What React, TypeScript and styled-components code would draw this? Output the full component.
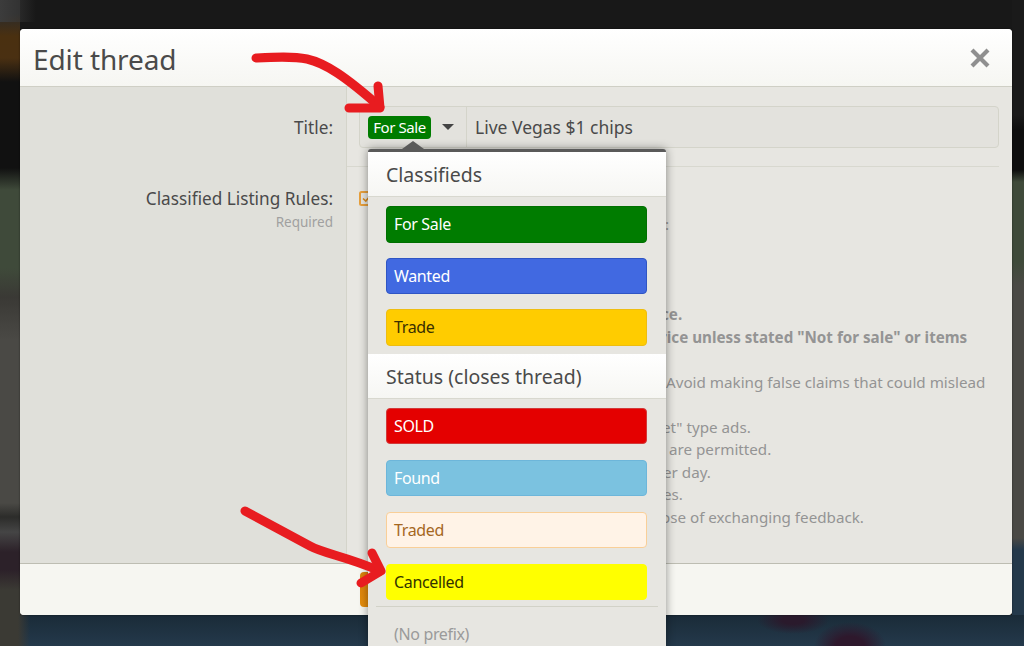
import React from 'react';
import styled, { createGlobalStyle } from 'styled-components';

const GlobalStyle = createGlobalStyle`
  html, body {
    margin: 0;
    height: 100%;
    overflow: hidden;
    background: #181818;
    font-family: 'Noto Sans', 'Open Sans', sans-serif;
  }
`;

// blurred forum page behind the overlay, only its edges show around the modal
const Page = styled.div`
  position: relative;
  box-sizing: border-box;
  width: 1024px;
  height: 646px;
  overflow: hidden;
  padding: 29px 12px 0 20px;
  background:
    radial-gradient(ellipse 36px 14px at 793px 620px, #2a1a2c 30%, rgba(42, 26, 44, 0) 100%),
    radial-gradient(ellipse 36px 24px at 850px 646px, #2e182c 40%, rgba(46, 24, 44, 0) 100%),
    linear-gradient(90deg, #3b3a34 0, #3b3a34 18px, rgba(59, 58, 52, 0) 30px) 0 600px / 40px 46px no-repeat,
    linear-gradient(180deg, #1a2b38 0, #24394b 100%) 0 615px / 100% 31px no-repeat,
    linear-gradient(90deg, #3c3c3c 0, rgba(60, 60, 60, 0) 36px) 0 0 / 40px 22px no-repeat,
    linear-gradient(180deg, #2b2b2b 0, #2b2b2b 14px, #4a3010 36px, #4a3012 58px, #111111 82px, #111111 168px,
      #3f4a3a 190px, #3f4a3a 268px, #3a3935 297px, #4a4945 340px, #4a4945 503px, #2c2c2a 517px, #454545 532px,
      #2c2129 552px, #2c2129 570px, #3b3a34 590px, #3b3a34 646px) 0 0 / 20px 646px no-repeat,
    linear-gradient(180deg, #1a1a1a 0, #1a1a1a 115px, #0e0e0e 130px, #0e0e0e 170px, #3f4a3a 182px, #3f4a3a 262px,
      #4a4945 285px, #4a4945 538px, #24394b 550px, #24394b 646px) right 0 / 12px 646px no-repeat,
    #181818;
`;

const Modal = styled.div`
  display: flex;
  flex-direction: column;
  width: 992px;
  height: 586px;
  border-radius: 4px;
  background: #e7e6e1;
  color: #4a4a4a;
  box-shadow: 0 0 2px rgba(0, 0, 0, 0.5);
`;

const ModalHeader = styled.div`
  display: flex;
  align-items: center;
  justify-content: space-between;
  box-sizing: border-box;
  height: 58px;
  padding: 3px 21px 0 13px;
  border-radius: 4px 4px 0 0;
  border-bottom: 1px solid #cfcfc5;
  background: linear-gradient(180deg, #ffffff 0%, #f6f6f2 100%);
`;

const ModalTitle = styled.h1`
  margin: 0;
  font-size: 28px;
  font-weight: 400;
  letter-spacing: -0.1px;
  color: #4a4a4a;
`;

const CloseIcon = styled.svg`
  display: block;
  width: 22px;
  height: 22px;
  margin-top: -3px;
`;

const ModalBody = styled.div`
  flex: 1;
  display: flex;
  flex-direction: column;
  min-height: 0;
`;

const FormRow = styled.div<{ $grow?: boolean }>`
  display: grid;
  grid-template-columns: 327px 1fr;
  ${({ $grow }) => ($grow ? 'flex: 1;' : 'height: 79px;')}
`;

const LabelCell = styled.div<{ $top: number }>`
  box-sizing: border-box;
  padding: ${({ $top }) => $top}px 13px 0 0;
  text-align: right;
  background: #e0e0da;
  border-right: 1px solid #d4d4ca;
`;

const Label = styled.div`
  font-size: 17.2px;
  line-height: 24px;
  color: #4a4a4a;
`;

const Hint = styled.div`
  font-size: 13.5px;
  line-height: 22px;
  color: #a0a0a0;
`;

const FieldCell = styled.div`
  box-sizing: border-box;
  padding: 19px 13px 0 12px;
`;

const RulesCell = styled(FieldCell)`
  padding-top: 24px;
  padding-right: 0;
  margin-right: 13px;
  border-top: 1px solid #d8d8cf;
`;

const TitleInput = styled.div`
  display: flex;
  align-items: stretch;
  height: 42px;
  box-sizing: border-box;
  background: #e3e2dd;
  border: 1px solid #d4d4ca;
  border-radius: 4px;
`;

const PrefixCell = styled.div`
  position: relative;
  display: flex;
  align-items: center;
  box-sizing: border-box;
  width: 107px;
  padding-left: 8px;
  border-right: 1px solid #d4d4ca;
`;

const PrefixBadge = styled.span`
  box-sizing: border-box;
  width: 63px;
  height: 23px;
  line-height: 23px;
  text-align: center;
  font-size: 15px;
  letter-spacing: -0.4px;
  color: #fff;
  background: #007c00;
  border-radius: 4px;
`;

const Caret = styled.span`
  width: 0;
  height: 0;
  margin-left: 11px;
  border-left: 6px solid transparent;
  border-right: 6px solid transparent;
  border-top: 6px solid #444;
`;

const TitleText = styled.span`
  align-self: center;
  padding-left: 8px;
  font-size: 17.5px;
  color: #4a4a4a;
`;

const Checkbox = styled.svg`
  display: block;
  width: 15px;
  height: 15px;
`;

const RuleLines = styled.div`
  margin-top: 7px;
  font-size: 15.2px;
  color: #949494;
`;

const RuleLine = styled.div<{ $indent: number; $bold?: boolean }>`
  height: 22.5px;
  line-height: 22.5px;
  padding-left: ${({ $indent }) => $indent}px;
  white-space: nowrap;
  font-weight: ${({ $bold }) => ($bold ? 700 : 400)};
`;

const ModalFooter = styled.div`
  display: flex;
  box-sizing: border-box;
  height: 52px;
  padding: 8px 0 0 340px;
  border-top: 1px solid #bdbdb2;
  border-radius: 0 0 4px 4px;
  background: #f6f6f1;
`;

const SaveButton = styled.div`
  width: 100px;
  height: 35px;
  border-radius: 4px;
  background: linear-gradient(180deg, #d97f0c 0%, #e58e0e 100%);
`;

const PrefixMenu = styled.div`
  position: absolute;
  left: 8px;
  top: 42px;
  width: 298px;
  background: #e7e6e1;
  border-top: 3px solid #5a5a5a;
  border-radius: 3px 3px 0 0;
  box-shadow: 0 0 10px rgba(0, 0, 0, 0.42);
  z-index: 5;

  &::before {
    content: '';
    position: absolute;
    left: 34px;
    top: -11px;
    border-left: 11px solid transparent;
    border-right: 11px solid transparent;
    border-bottom: 8px solid #5a5a5a;
  }
`;

const GroupHeading = styled.div`
  box-sizing: border-box;
  height: 45px;
  line-height: 46px;
  padding-left: 18px;
  font-size: 19.5px;
  color: #4a4a4a;
  background: linear-gradient(180deg, #ffffff 0%, #f6f6f3 100%);
  border-bottom: 1px solid #d8d8cf;
`;

const OptionList = styled.div<{ $gap: number }>`
  display: flex;
  flex-direction: column;
  gap: ${({ $gap }) => $gap}px;
  padding: 9px 19px 8px 18px;
`;

const Option = styled.div<{ $bg: string; $fg: string; $border: string }>`
  box-sizing: border-box;
  height: 36.5px;
  line-height: 35px;
  padding-left: 7px;
  font-size: 16px;
  letter-spacing: -0.35px;
  color: ${({ $fg }) => $fg};
  background: ${({ $bg }) => $bg};
  border: 1px solid ${({ $border }) => $border};
  border-radius: 4px;
`;

const MenuDivider = styled.div`
  height: 1px;
  margin: -2px 8px 0;
  background: #d2d2c8;
`;

const NoPrefix = styled.div`
  padding: 16px 0 0 26px;
  height: 60px;
  font-size: 16px;
  letter-spacing: -0.35px;
  color: #9a9a9a;
`;

const Annotations = styled.svg`
  position: absolute;
  left: 0;
  top: 0;
  width: 1024px;
  height: 646px;
  pointer-events: none;
  z-index: 10;
`;

const classifieds = [
  { label: 'For Sale', bg: '#007c00', fg: '#ffffff', border: '#007000' },
  { label: 'Wanted', bg: '#4169e1', fg: '#ffffff', border: '#2f55c4' },
  { label: 'Trade', bg: '#ffcc00', fg: '#3a3000', border: '#eebd10' },
];

const statuses = [
  { label: 'SOLD', bg: '#e40000', fg: '#ffffff', border: '#d23a3a' },
  { label: 'Found', bg: '#7bc2e0', fg: '#ffffff', border: '#6db6da' },
  { label: 'Traded', bg: '#fff3e7', fg: '#a5671f', border: '#f9cf98' },
  { label: 'Cancelled', bg: '#ffff00', fg: '#333300', border: '#ffff00' },
];

// only the line ends that stick out from behind the open menu are readable
const ruleLines = [
  { text: ':', indent: 306 },
  { text: '', indent: 0 },
  { text: '', indent: 0 },
  { text: '', indent: 0 },
  { text: 'ce.', indent: 302, bold: true },
  { text: 'rice unless stated "Not for sale" or items', indent: 301, bold: true },
  { text: '', indent: 0 },
  { text: 'Avoid making false claims that could mislead', indent: 307 },
  { text: '', indent: 0 },
  { text: 'et" type ads.', indent: 303 },
  { text: 'are permitted.', indent: 310 },
  { text: 'er day.', indent: 304 },
  { text: 'es.', indent: 304 },
  { text: 'ose of exchanging feedback.', indent: 302 },
];

export default function App() {
  return (
    <Page>
      <GlobalStyle />
      <Modal>
        <ModalHeader>
          <ModalTitle>Edit thread</ModalTitle>
          <CloseIcon viewBox="0 0 22 22">
            <path d="M3 3 L19 19 M19 3 L3 19" stroke="#8f8f8f" strokeWidth="4.2" fill="none" />
          </CloseIcon>
        </ModalHeader>
        <ModalBody>
          <FormRow>
            <LabelCell $top={29}>
              <Label>Title:</Label>
            </LabelCell>
            <FieldCell>
              <TitleInput>
                <PrefixCell>
                  <PrefixBadge>For Sale</PrefixBadge>
                  <Caret />
                  <PrefixMenu>
                    <GroupHeading>Classifieds</GroupHeading>
                    <OptionList $gap={15}>
                      {classifieds.map((o) => (
                        <Option key={o.label} $bg={o.bg} $fg={o.fg} $border={o.border}>
                          {o.label}
                        </Option>
                      ))}
                    </OptionList>
                    <GroupHeading>Status (closes thread)</GroupHeading>
                    <OptionList $gap={15.5}>
                      {statuses.map((o) => (
                        <Option key={o.label} $bg={o.bg} $fg={o.fg} $border={o.border}>
                          {o.label}
                        </Option>
                      ))}
                    </OptionList>
                    <MenuDivider />
                    <NoPrefix>(No prefix)</NoPrefix>
                  </PrefixMenu>
                </PrefixCell>
                <TitleText>Live Vegas $1 chips</TitleText>
              </TitleInput>
            </FieldCell>
          </FormRow>
          <FormRow $grow>
            <LabelCell $top={21}>
              <Label>Classified Listing Rules:</Label>
              <Hint>Required</Hint>
            </LabelCell>
            <RulesCell>
              <Checkbox viewBox="0 0 15 15">
                <rect x="1" y="1" width="13" height="13" rx="1.5" fill="none" stroke="#e8a03c" strokeWidth="2" />
                <path d="M4 7.5 L6.8 10 L11 5" fill="none" stroke="#d98a1c" strokeWidth="1.6" />
              </Checkbox>
              <RuleLines>
                {ruleLines.map((line, i) => (
                  <RuleLine key={i} $indent={line.indent} $bold={line.bold}>
                    {line.text}
                  </RuleLine>
                ))}
              </RuleLines>
            </RulesCell>
          </FormRow>
        </ModalBody>
        <ModalFooter>
          <SaveButton />
        </ModalFooter>
      </Modal>
      <Annotations viewBox="0 0 1024 646">
        <g fill="none" stroke="#e81c20" strokeWidth="9" strokeLinecap="round" strokeLinejoin="round">
          <path d="M256 58 C275 57 293 56 307 59 C325 63 345 76 380 107" />
          <path d="M378 86 L380 108 L349 108" />
          <path d="M245 511 C265 522 290 535 310 546 C325 554 345 556 380 571" />
          <path d="M372 553 L381 571 L361 583" />
        </g>
      </Annotations>
    </Page>
  );
}
